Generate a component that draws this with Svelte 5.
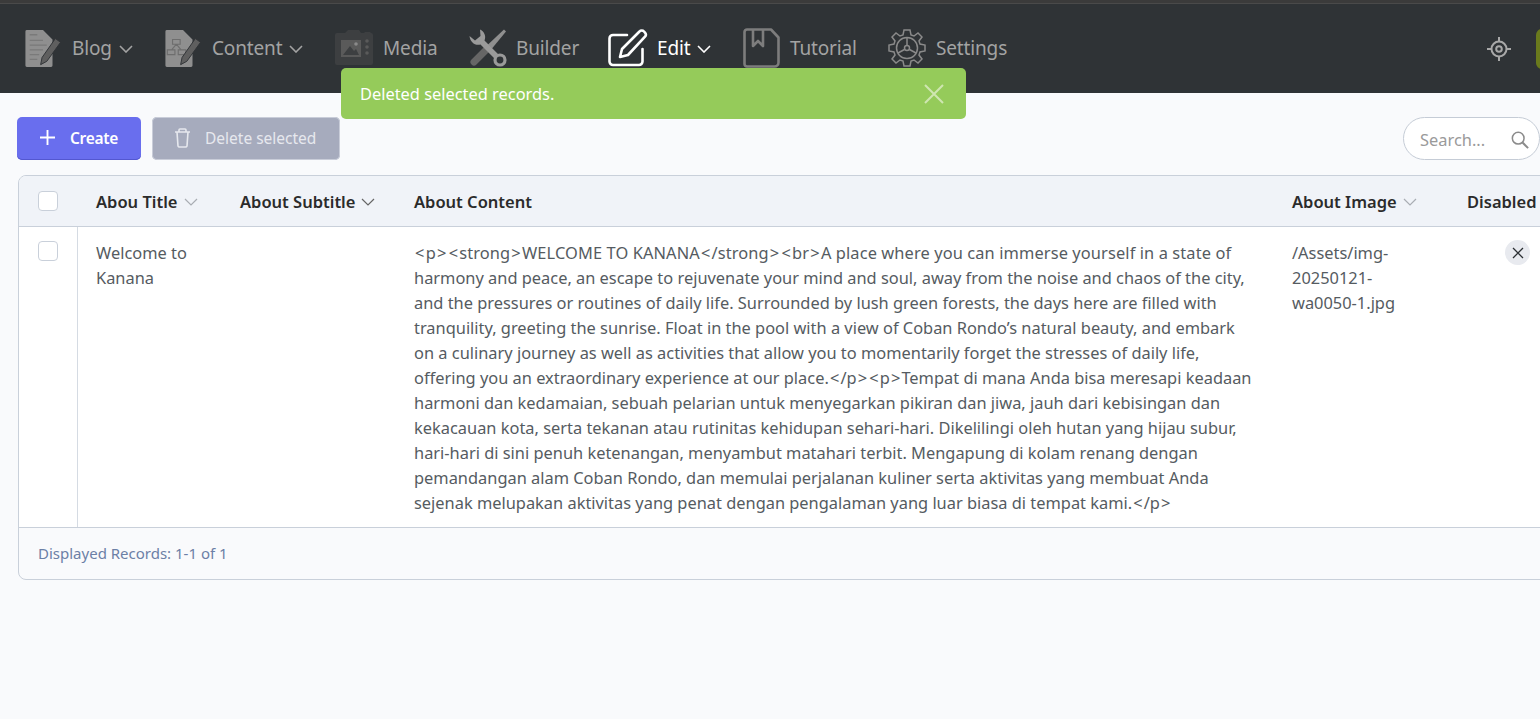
<script>
  const lines = [
    "<p><strong>WELCOME TO KANANA</strong><br>A place where you can immerse yourself in a state of",
    "harmony and peace, an escape to rejuvenate your mind and soul, away from the noise and chaos of the city,",
    "and the pressures or routines of daily life. Surrounded by lush green forests, the days here are filled with",
    "tranquility, greeting the sunrise. Float in the pool with a view of Coban Rondo’s natural beauty, and embark",
    "on a culinary journey as well as activities that allow you to momentarily forget the stresses of daily life,",
    "offering you an extraordinary experience at our place.</p><p>Tempat di mana Anda bisa meresapi keadaan",
    "harmoni dan kedamaian, sebuah pelarian untuk menyegarkan pikiran dan jiwa, jauh dari kebisingan dan",
    "kekacauan kota, serta tekanan atau rutinitas kehidupan sehari-hari. Dikelilingi oleh hutan yang hijau subur,",
    "hari-hari di sini penuh ketenangan, menyambut matahari terbit. Mengapung di kolam renang dengan",
    "pemandangan alam Coban Rondo, dan memulai perjalanan kuliner serta aktivitas yang membuat Anda",
    "sejenak melupakan aktivitas yang penat dengan pengalaman yang luar biasa di tempat kami.</p>"
  ].map((l) => l.split(/([<>])/));
</script>

<div class="page">
  <div class="strip"></div>
  <header class="bar">
    <nav class="nav">
      <a class="item blog">
        <svg class="ic" width="38" height="38" viewBox="0 0 40 40">
          <path d="M3 1h17l10 10v27.500a1.500 1.500 0 0 1-1.500 1.500H3A1.500 1.500 0 0 1 1.500 38.500V2.500A1.500 1.500 0 0 1 3 1z" fill="#8f8f8f"/>
          <path d="M6 6h8M6 12h14M6 17h18M6 22h14M6 27h10M6 32h8" stroke="#7a7a7a" stroke-width="1.500"/>
          <path d="M33 10l5.500 4-14.500 20-6.500 3.500 1.500-7.500z" fill="#5f5f5f" stroke="#2f3336" stroke-width="1"/>
        </svg>
        <span>Blog</span>
        <svg class="chev" width="14" height="8" viewBox="0 0 14 8"><path d="M1 1l6 6 6-6"/></svg>
      </a>
      <a class="item content">
        <svg class="ic" width="38" height="38" viewBox="0 0 40 40">
          <path d="M3 1h17l10 10v27.500a1.500 1.500 0 0 1-1.500 1.500H3A1.500 1.500 0 0 1 1.500 38.500V2.500A1.500 1.500 0 0 1 3 1z" fill="#8f8f8f"/>
          <path d="M9 11h8v5H9zM3.500 22h8v5h-8zM15 22h8v5h-8zM13 16l-5 6M13 16l5 6" fill="none" stroke="#6e6e6e" stroke-width="1.200"/>
          <path d="M33 10l5.500 4-14.500 20-6.500 3.500 1.500-7.500z" fill="#5f5f5f" stroke="#2f3336" stroke-width="1"/>
        </svg>
        <span>Content</span>
        <svg class="chev" width="14" height="8" viewBox="0 0 14 8"><path d="M1 1l6 6 6-6"/></svg>
      </a>
      <a class="item media">
        <svg class="ic" width="38" height="38" viewBox="0 0 38 38">
          <path d="M2 4h8l3-3h11l2 3h3l1-1h5l1 1h0a2 2 0 0 1 2 2v28a2 2 0 0 1-2 2H2a2 2 0 0 1-2-2V6a2 2 0 0 1 2-2z" fill="#3d3f41"/>
          <rect x="6" y="11" width="20" height="17" fill="#5a5a5a"/>
          <path d="M8 26l7-9 4 5 2-2 3 6z" fill="#3d3f41"/>
          <circle cx="21" cy="15" r="1.800" fill="#8a8a8a"/>
          <circle cx="32" cy="12" r="1.800" fill="#5a5a5a"/><circle cx="32" cy="18" r="1.800" fill="#5a5a5a"/><circle cx="32" cy="24" r="1.800" fill="#5a5a5a"/>
        </svg>
        <span>Media</span>
      </a>
      <a class="item builder">
        <svg class="ic" width="38" height="38" viewBox="0 0 38 38">
          <path d="M19 19L5 33" stroke="#666" stroke-width="7" stroke-linecap="round"/>
          <path d="M35 .5l2 2-14 17-4-4z" fill="#8f8f8f"/>
          <path d="M11 .5C15 2 17.500 7 15.500 11.500L31 27 27 31 11.500 15.500C6 17 1 13 .5 7L6 11.500 11.500 7z" fill="#9a9a9a"/>
          <circle cx="31" cy="31" r="5" fill="#2f3336" stroke="#9a9a9a" stroke-width="3.200"/>
        </svg>
        <span>Builder</span>
      </a>
      <a class="item edit">
        <svg class="ic" width="40" height="38" viewBox="0 0 40 38" fill="none" stroke="#fff" stroke-width="2.600" stroke-linejoin="round" stroke-linecap="round">
          <path d="M19 6H5a3.500 3.500 0 0 0-3.500 3.500v23A3.500 3.500 0 0 0 5 36h26a3.500 3.500 0 0 0 3.500-3.500V20"/>
          <path d="M31.500 2.500a3 3 0 0 1 4.500 0l1 1.200a3 3 0 0 1 0 4L20 26l-8 2 2-8z"/>
        </svg>
        <span>Edit</span>
        <svg class="chev" width="14" height="8" viewBox="0 0 14 8"><path d="M1 1l6 6 6-6"/></svg>
      </a>
      <a class="item tutorial">
        <svg class="ic" width="37" height="40" viewBox="0 0 37 40" fill="none" stroke="#7d7d7d" stroke-width="2.600" stroke-linejoin="round">
          <path d="M4 1.500h24l7.500 8v25a4 4 0 0 1-4 4H4a2.500 2.500 0 0 1-2.500-2.500V4A2.500 2.500 0 0 1 4 1.500z"/>
          <path d="M10 1.500V18l5-5 5 5V1.500"/>
        </svg>
        <span>Tutorial</span>
      </a>
      <a class="item settings">
        <svg class="ic" width="38" height="38" viewBox="-19 -19 38 38" fill="none" stroke="#8a8a8a" stroke-width="1.500">
          <path d="M-3-18h6l1 5 3 1 4-3 4 4-3 4 1 3 5 1v6l-5 1-1 3 3 4-4 4-4-3-3 1-1 5h-6l-1-5-3-1-4 3-4-4 3-4-1-3-5-1v-6l5-1 1-3-3-4 4-4 4 3 3-1z"/>
          <circle r="10.500"/>
          <circle r="2.500"/>
          <path d="M0-3V-10M-2.500 1.500L-9 5M2.500 1.500L9 5"/>
        </svg>
        <span>Settings</span>
      </a>
    </nav>
    <div class="right">
      <svg width="26" height="26" viewBox="0 0 26 26" fill="none" stroke="#a8a8a8" stroke-width="2">
        <circle cx="13" cy="13" r="7.500"/><circle cx="13" cy="13" r="2.800"/>
        <path d="M13 1v4M13 21v4M1 13h4M21 13h4"/>
      </svg>
      <div class="avatar"></div>
    </div>
  </header>

  <div class="toast">
    <span>Deleted selected records.</span>
    <svg width="20" height="20" viewBox="0 0 20 20" fill="none" stroke="#cfe6b1" stroke-width="2"><path d="M1 1l18 18M19 1L1 19"/></svg>
  </div>

  <main class="main">
    <div class="toolbar">
      <button class="btn primary">
        <svg width="15" height="15" viewBox="0 0 16 16" stroke="#fff" stroke-width="2"><path d="M8 0v16M0 8h16"/></svg>
        <span>Create</span>
      </button>
      <button class="btn muted">
        <svg width="17" height="20" viewBox="0 0 17 20" fill="none" stroke="#e6e8ee" stroke-width="1.600"><path d="M1 4h15M3 4l1 14a1.500 1.500 0 0 0 1.500 1h6a1.500 1.500 0 0 0 1.500-1l1-14M5 4V2a1 1 0 0 1 1-1h5a1 1 0 0 1 1 1v2"/></svg>
        <span>Delete selected</span>
      </button>
      <div class="search">
        <span>Search...</span>
        <svg width="18" height="18" viewBox="0 0 20 20" fill="none" stroke="#8b8b8b" stroke-width="1.700"><circle cx="8" cy="8" r="6.500"/><path d="M12.500 12.500L19 19" stroke-width="2.200"/></svg>
      </div>
    </div>

    <section class="card">
      <div class="row head">
        <div class="cell c0"><span class="check"></span></div>
        <div class="cell c1">Abou Title <svg class="sort" width="14" height="8" viewBox="0 0 14 8"><path d="M1 1l6 6 6-6"/></svg></div>
        <div class="cell c2">About Subtitle <svg class="sort dark" width="14" height="8" viewBox="0 0 14 8"><path d="M1 1l6 6 6-6"/></svg></div>
        <div class="cell c3">About Content</div>
        <div class="cell c4">About Image <svg class="sort" width="14" height="8" viewBox="0 0 14 8"><path d="M1 1l6 6 6-6"/></svg></div>
        <div class="cell c5">Disabled</div>
      </div>
      <div class="row body">
        <div class="cell c0"><span class="check"></span></div>
        <div class="cell c1">Welcome to<br>Kanana</div>
        <div class="cell c2"></div>
        <div class="cell c3">
          {#each lines as parts}
            <div class="line">{#each parts as part}{#if part === "<" || part === ">"}<span class="ang">{part}</span>{:else}{part}{/if}{/each}</div>
          {/each}
        </div>
        <div class="cell c4">/Assets/img-<br>20250121-<br>wa0050-1.jpg</div>
        <div class="cell c5">
          <span class="flag"><svg width="12" height="12" viewBox="0 0 12 12" stroke="#2b2f33" stroke-width="1.300"><path d="M1 1l10 10M11 1L1 11"/></svg></span>
        </div>
      </div>
      <div class="foot">Displayed Records: 1-1 of 1</div>
    </section>
  </main>
</div>

<style>
  :global(body) {
    margin: 0;
    background: #f9fafc;
    overflow: hidden;
  }
  .page {
    position: relative;
    width: 1540px;
    height: 719px;
    overflow: hidden;
    font-family: "Noto Sans", "Open Sans", sans-serif;
    background: #f9fafc;
  }
  .strip {
    height: 4px;
    background: #3b3b3b;
    border-bottom: 1px solid #4a4a4a;
    box-sizing: border-box;
  }
  .bar {
    height: 89px;
    background: #2f3336;
    display: flex;
    align-items: center;
    justify-content: space-between;
  }
  .nav {
    display: flex;
    align-items: center;
    padding-left: 24px;
    padding-bottom: 2px;
  }
  .item {
    display: flex;
    align-items: center;
    color: #a3a3a3;
    font-size: 19px;
    letter-spacing: -0.15px;
  }
  .item span { margin-left: 10px; }
  .item.blog { width: 140px; }
  .item.content { width: 171px; }
  .item.media { width: 134px; }
  .item.builder { width: 139px; }
  .item.builder span { margin-left: 9px; }
  .item.edit { width: 135px; color: #fff; }
  .item.tutorial { width: 145px; }
  .item.edit span { margin-left: 9px; }
  .chev {
    margin-left: 7px;
    margin-top: 3px;
    fill: none;
    stroke: currentColor;
    stroke-width: 1.600;
  }
  .right {
    display: flex;
    align-items: center;
    gap: 24px;
    margin-right: -6px;
  }
  .avatar {
    width: 10px;
    height: 40px;
    border-radius: 6px 0 0 6px;
    background: #6a7a1c;
  }
  .toast {
    position: absolute;
    left: 341px;
    top: 68px;
    width: 625px;
    height: 51px;
    box-sizing: border-box;
    padding: 0 22px 0 19px;
    border-radius: 5px;
    background: #95cb5a;
    color: #fff;
    font-size: 16.400px;
    display: flex;
    align-items: center;
    justify-content: space-between;
  }
  .main { padding: 24px 0 0 17px; }
  .toolbar {
    display: flex;
    align-items: center;
    height: 43px;
    position: relative;
  }
  .btn {
    height: 43px;
    border: 0;
    border-radius: 5px;
    display: flex;
    align-items: center;
    font-family: inherit;
    font-size: 15.500px;
    color: #fff;
    padding: 0 0 2px;
  }
  .primary {
    width: 124px;
    background: #696eee;
    font-weight: 600;
    padding-left: 23px;
    gap: 15px;
    box-shadow: inset 0 -1px 0 #5357d0;
    letter-spacing: -0.3px;
  }
  .muted {
    width: 188px;
    margin-left: 11px;
    background: #a6abbd;
    color: #e6e8ee;
    padding-left: 22px;
    gap: 14px;
    box-shadow: 0 0 0 1px #c9cdd9 inset;
  }
  .search {
    margin-left: auto;
    width: 137px;
    height: 43px;
    box-sizing: border-box;
    border: 1px solid #c5ccd6;
    border-radius: 22px;
    background: #fff;
    color: #9a9a9a;
    font-size: 16.400px;
    display: flex;
    align-items: center;
    padding: 2px 0 0 16px;
    gap: 26px;
    flex: none;
  }
  .card {
    margin: 15px 0 0 1px;
    width: 1700px;
    border: 1px solid #c9d0da;
    border-radius: 8px;
    background: #f9fafc;
    box-sizing: border-box;
    height: 405px;
    overflow: hidden;
  }
  .row {
    display: grid;
    grid-template-columns: 59px 143px 174px 878px 175px 1fr;
  }
  .head {
    height: 50px;
    background: #f0f3f8;
    border-bottom: 1px solid #c9d0da;
    align-items: center;
    color: #2b2b2b;
    font-size: 16.500px;
    font-weight: 600;
  }
  .head .cell { white-space: nowrap; display: flex; align-items: center; gap: 6px; }
  .head .c1, .head .c2, .head .c3, .head .c4, .head .c5 { padding-left: 19px; }
  .head .c1 { padding-left: 18px; }
  .body {
    height: 300px;
    background: #fff;
    color: #555b61;
    font-size: 16.400px;
    line-height: 25px;
  }
  .body .cell { padding-top: 13px; padding-left: 19px; box-sizing: border-box; }
  .body .c1 { padding-left: 18px; }
  .body .c0 { border-right: 1px solid #d5dbe3; padding: 14px 1px 0 0; }
  .c0 { display: flex !important; justify-content: center; align-items: flex-start; }
  .head .c0 { align-items: center; padding-right: 1px; }
  .check {
    width: 18px;
    height: 18px;
    border: 1px solid #c9d0da;
    border-radius: 4px;
    background: #fff;
    display: block;
  }
  .line { white-space: nowrap; }
  .line:first-child { letter-spacing: 0.11px; }
  .ang { padding: 0 1.100px; }
  .sort { fill: none; stroke: #a9adb3; stroke-width: 1.200; margin-top: 2px; }
  .sort.dark { stroke: #666; }
  .flag {
    display: flex;
    align-items: center;
    justify-content: center;
    width: 25px;
    height: 25px;
    border-radius: 50%;
    background: #e8eaef;
    margin-left: 38px;
  }
  .foot {
    border-top: 1px solid #c9d0da;
    height: 51px;
    box-sizing: border-box;
    padding: 13px 0 0 19px;
    color: #6c80a6;
    font-size: 15px;
    line-height: 25px;
  }
</style>
